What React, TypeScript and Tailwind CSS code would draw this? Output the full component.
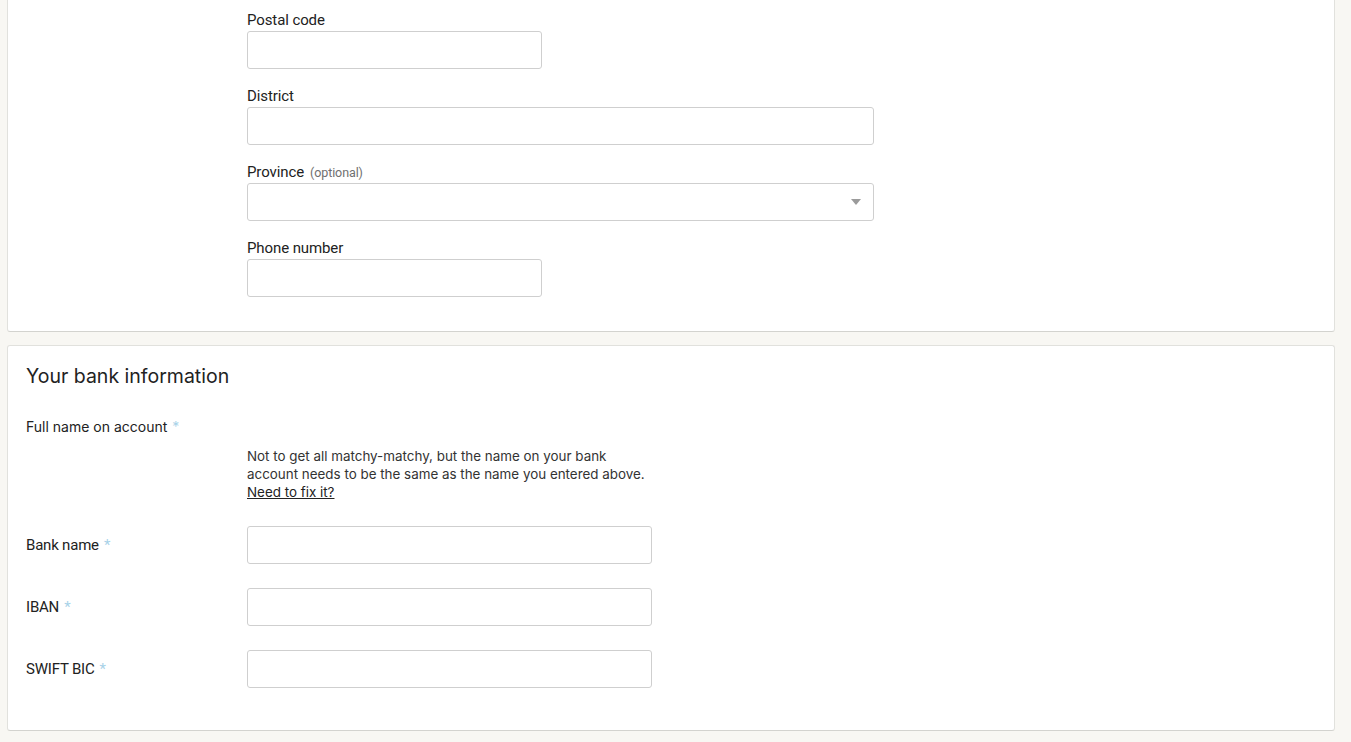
import React from "react";

const Req = () => <span className="ml-[5px] text-[#a8d2e8]">*</span>;

function StackField({ label, optional, width, select }: { label: string; optional?: boolean; width: string; select?: boolean }) {
  return (
    <div className="mb-[17px]">
      <div className="h-[20px] leading-[20px] mb-px text-[15px] text-[#222222] font-['Roboto',sans-serif] tracking-[-0.1px]">
        {label}
        {optional && <span className="ml-[6px] text-[12.5px] text-[#707070]">(optional)</span>}
      </div>
      <div className={`relative h-[38px] ${width} rounded-[3px] border border-[#cfcfcf] bg-white`}>
        {select && (
          <span className="absolute right-[12px] top-[15px] h-0 w-0 border-l-[5px] border-r-[5px] border-t-[6px] border-l-transparent border-r-transparent border-t-[#9b9b9b]" />
        )}
      </div>
    </div>
  );
}

function RowField({ label }: { label: string }) {
  return (
    <div className="flex items-center">
      <div className="w-[221px] text-[15px] text-[#222222] font-['Roboto',sans-serif] tracking-[-0.2px]">
        {label}
        <Req />
      </div>
      <div className="h-[38px] w-[405px] rounded-[3px] border border-[#cfcfcf] bg-white" />
    </div>
  );
}

export default function App() {
  return (
    <div className="min-h-[742px] bg-[#f8f7f3] font-['Inter',sans-serif] text-[#222222]">
      <div className="pl-[7px] w-[1335px] pb-[20px]">
        <div className="rounded-b-[3px] border border-t-0 border-[#e1e1dd] border-b-[#d3d3cf] bg-white pl-[239px] pt-[10px] pb-[17px]">
          <StackField label="Postal code" width="w-[295px]" />
          <StackField label="District" width="w-[627px]" />
          <StackField label="Province" optional width="w-[627px]" select />
          <StackField label="Phone number" width="w-[295px]" />
        </div>

        <div className="mt-[13px] rounded-[3px] border border-[#e1e1dd] border-b-[#d3d3cf] bg-white pl-[18px] pt-[16px] pb-[42px]">
          <h2 className="h-[28px] leading-[28px] text-[19.5px] font-normal text-[#222222]">Your bank information</h2>
          <div className="mt-[27px] h-[20px] leading-[20px] text-[14px] text-[#222222]">
            Full name on account
            <Req />
          </div>
          <div className="ml-[221px] mt-[10px] w-[402px] text-[13.4px] leading-[18px] text-[#333333]">
            Not to get all matchy-matchy, but the name on your bank account needs to be the same as the name you entered above.
            <br />
            <a className="underline text-[#222222]">Need to fix it?</a>
          </div>
          <div className="mt-[25px] flex flex-col gap-[24px]">
            <RowField label="Bank name" />
            <RowField label="IBAN" />
            <RowField label="SWIFT BIC" />
          </div>
        </div>
      </div>
    </div>
  );
}
